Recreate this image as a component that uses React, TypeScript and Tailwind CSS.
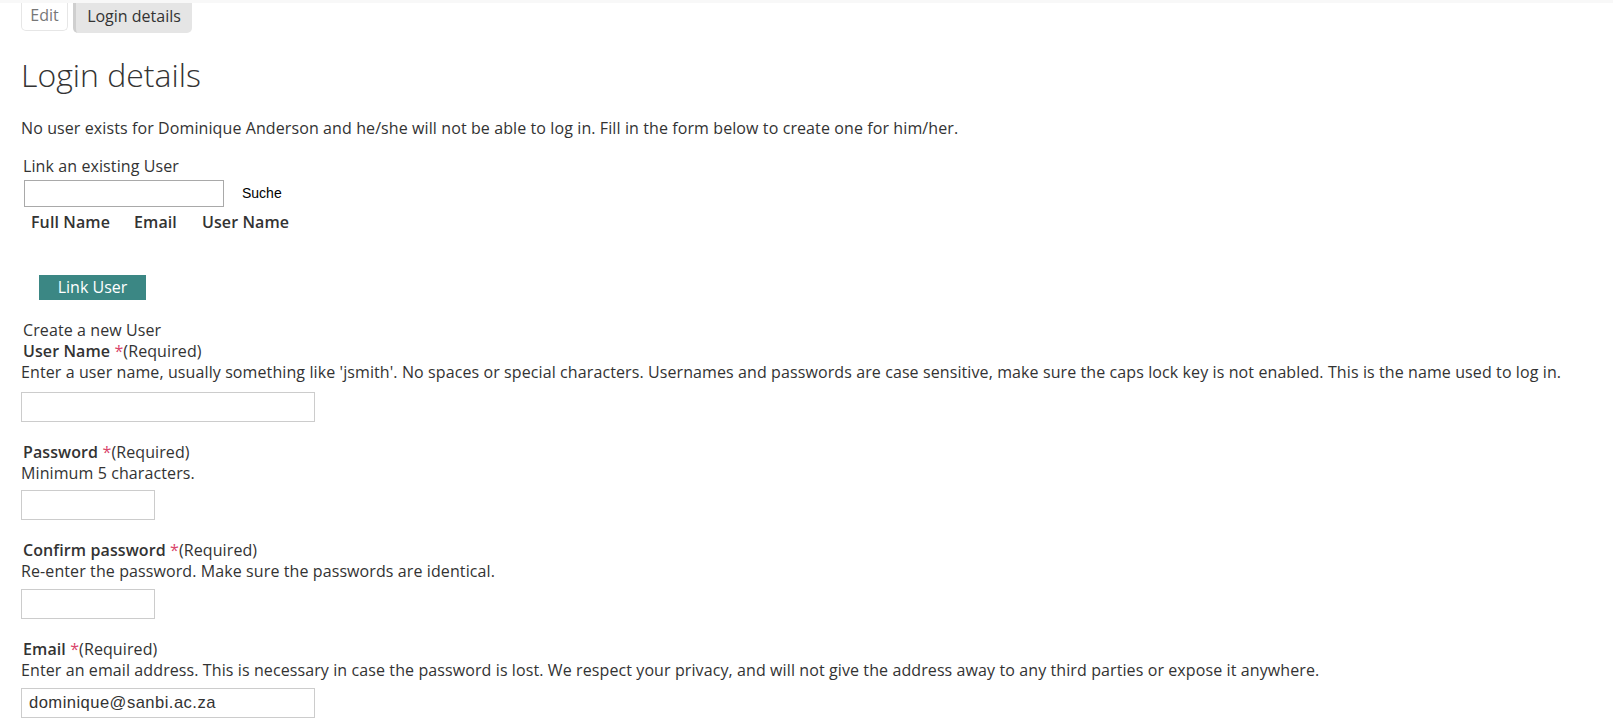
import React from "react";

const OS = { fontFamily: '"Open Sans", "Liberation Sans", sans-serif' };

function Req() {
  return (
    <>
      {" "}
      <span className="text-[#d9456b] font-normal">*</span>
      <span className="font-normal">(Required)</span>
    </>
  );
}

export default function App() {
  return (
    <div className="min-h-[725px] bg-white text-[#333] text-[16px] leading-[21px] tracking-[0.1px]" style={OS}>
      <div className="h-[3px] w-full bg-[#f8f8f8]" />
      <div className="flex items-start pl-[21px] tracking-normal">
        <div className="h-[28px] w-[47px] flex items-center justify-center border border-t-0 border-[#e6e6e6] rounded-b-[5px] text-[16px] text-[#777] pb-[2px]">
          Edit
        </div>
        <div className="ml-[5px] h-[30px] w-[119px] flex items-center justify-center bg-[#e5e5e5] border-l-[3px] border-[#cfcfcf] rounded-b-[5px] text-[16px] text-[#333] pb-[4px]">
          Login details
        </div>
      </div>

      <div className="pl-[21px]">
        <h1 className="mt-[24px] text-[32px] leading-[35px] font-light text-[#333] tracking-normal">Login details</h1>
        <p className="mt-[26px]">
          No user exists for Dominique Anderson and he/she will not be able to log in. Fill in the form below to create one for him/her.
        </p>

        <div className="mt-[17px] pl-[2px]">
          <div>Link an existing User</div>
          <div className="mt-[3px] flex items-center">
            <input
              type="text"
              className="ml-[1px] h-[27px] w-[200px] border border-[#a9a9a9] bg-white outline-none"
            />
            <span
              className="ml-[18px] text-[14px] text-black tracking-normal"
              style={{ fontFamily: '"Liberation Sans", Arial, sans-serif' }}
            >
              Suche
            </span>
          </div>
          <div className="mt-[5px] flex font-semibold">
            <div className="ml-[8px] w-[103px]">Full Name</div>
            <div className="w-[68px]">Email</div>
            <div>User Name</div>
          </div>
          <div className="mt-[42px] ml-[16px] h-[25px] w-[107px] bg-[#3b8784] text-white text-[16px] tracking-normal flex items-center justify-center">
            Link User
          </div>
        </div>

        <div className="mt-[20px]">
          <div className="pl-[2px]">Create a new User</div>
          <div className="pl-[2px] font-semibold">
            User Name<Req />
          </div>
          <div>
            Enter a user name, usually something like 'jsmith'. No spaces or special characters. Usernames and passwords are case sensitive, make sure the caps lock key is not enabled. This is the name used to log in.
          </div>
          <input type="text" className="mt-[9px] block h-[30px] w-[294px] border border-[#cccccc] outline-none" />

          <div className="mt-[20px] pl-[2px] font-semibold">
            Password<Req />
          </div>
          <div>Minimum 5 characters.</div>
          <input type="password" className="mt-[6px] block h-[30px] w-[134px] border border-[#cccccc] outline-none" />

          <div className="mt-[20px] pl-[2px] font-semibold">
            Confirm password<Req />
          </div>
          <div>Re-enter the password. Make sure the passwords are identical.</div>
          <input type="password" className="mt-[7px] block h-[30px] w-[134px] border border-[#cccccc] outline-none" />

          <div className="mt-[20px] pl-[2px] font-semibold">
            Email<Req />
          </div>
          <div>
            Enter an email address. This is necessary in case the password is lost. We respect your privacy, and will not give the address away to any third parties or expose it anywhere.
          </div>
          <input
            type="text"
            defaultValue="dominique@sanbi.ac.za"
            className="mt-[7px] block h-[30px] w-[294px] border border-[#cccccc] outline-none px-[7px] text-[16.6px]! tracking-[0.45px]! text-[#333]"
            style={{ fontFamily: '"Liberation Sans", Arial, sans-serif' }}
          />
        </div>
      </div>
    </div>
  );
}
